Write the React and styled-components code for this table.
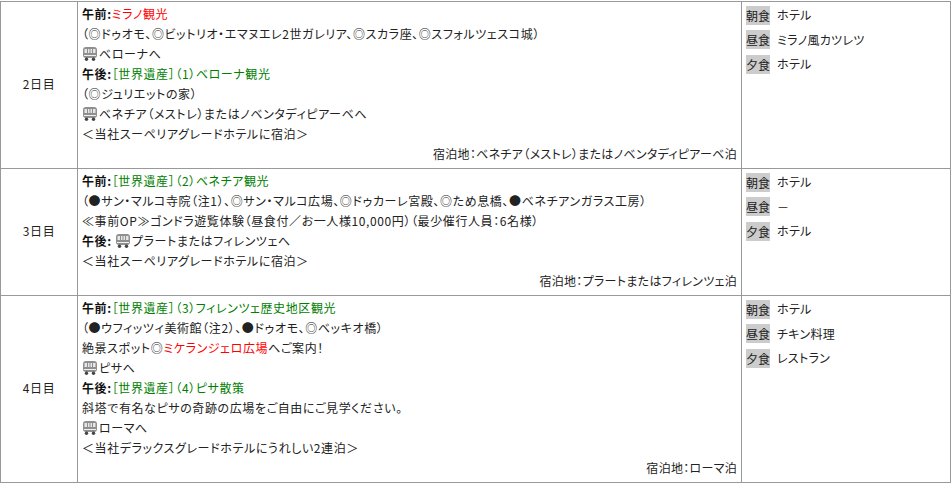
import React from "react"
import styled, { createGlobalStyle } from "styled-components"

const GlobalStyle = createGlobalStyle`
  body {
    margin: 0;
    background: #fff;
    font-family: "Noto Sans CJK JP", "Noto Sans", sans-serif;
    font-size: 12px;
    color: #222;
  }
`

const Page = styled.div`
  padding-top: 1px;
`

const Table = styled.table`
  width: 950px;
  border-collapse: collapse;
  table-layout: fixed;
  font-feature-settings: "palt";
  letter-spacing: 0.6px;
`

const Cell = styled.td`
  border: 1px solid #999;
  padding: 2px 4px 4px;
  line-height: 20px;
  vertical-align: top;
`

const DayCell = styled(Cell)`
  text-align: center;
  vertical-align: middle;
`

const Line = styled.div`
  white-space: nowrap;
`

const Stay = styled.div`
  text-align: right;
  letter-spacing: 0.3px;
`

const Label = styled.b`
  font-weight: bold;
  color: #111;
`

const Red = styled.span`
  color: #ff0000;
`

const Green = styled.span`
  color: #008000;
`

const MealRow = styled.div`
  display: flex;
  align-items: center;
  gap: 7px;
  height: 20px;
  margin: 1px 0 4.5px;
  letter-spacing: 0.3px;
`

const MealTag = styled.span`
  background: #cccccc;
  line-height: 19px;
  letter-spacing: 0;
`

const Icon = styled.svg`
  vertical-align: -3px;
  margin-right: 1px;
`

const Bus = () => (
  <Icon width="16" height="16" viewBox="0 0 16 16">
    <rect x="1" y="1" width="14" height="11" rx="3" fill="#8f8f8f" />
    <rect x="2.5" y="3" width="11" height="4" fill="#e6e6e6" />
    <rect x="5" y="3" width="1" height="4" fill="#8f8f8f" />
    <rect x="7.5" y="3" width="1" height="4" fill="#8f8f8f" />
    <rect x="10" y="3" width="1" height="4" fill="#8f8f8f" />
    <rect x="2" y="9" width="12" height="1" fill="#f0f0f0" />
    <circle cx="4.5" cy="13.3" r="1.7" fill="#444" />
    <circle cx="11.5" cy="13.3" r="1.7" fill="#444" />
  </Icon>
)

const Meals = ({ items }) => (
  <Cell>
    {items.map(([tag, text]) => (
      <MealRow key={tag}>
        <MealTag>{tag}</MealTag>
        <span>{text}</span>
      </MealRow>
    ))}
  </Cell>
)

export default function App() {
  return (
    <Page>
      <GlobalStyle />
      <Table>
        <colgroup>
          <col style={{ width: 77 }} />
          <col style={{ width: 664 }} />
          <col style={{ width: 209 }} />
        </colgroup>
        <tbody>
          <tr>
            <DayCell>2日目</DayCell>
            <Cell>
              <Line><Label>午前:</Label><Red>ミラノ観光</Red></Line>
              <Line>（◎ドゥオモ、◎ビットリオ・エマヌエレ2世ガレリア、◎スカラ座、◎スフォルツェスコ城）</Line>
              <Line><Bus />ベローナへ</Line>
              <Line><Label>午後:</Label><Green>［世界遺産］（1）ベローナ観光</Green></Line>
              <Line>（◎ジュリエットの家）</Line>
              <Line><Bus />ベネチア（メストレ）またはノベンタディピアーベへ</Line>
              <Line>＜当社スーペリアグレードホテルに宿泊＞</Line>
              <Stay>宿泊地：ベネチア（メストレ）またはノベンタディピアーベ泊</Stay>
            </Cell>
            <Meals items={[["朝食", "ホテル"], ["昼食", "ミラノ風カツレツ"], ["夕食", "ホテル"]]} />
          </tr>
          <tr>
            <DayCell>3日目</DayCell>
            <Cell>
              <Line><Label>午前:</Label><Green>［世界遺産］（2）ベネチア観光</Green></Line>
              <Line>（●サン・マルコ寺院（注1）、◎サン・マルコ広場、◎ドゥカーレ宮殿、◎ため息橋、●ベネチアンガラス工房）</Line>
              <Line>≪事前OP≫ゴンドラ遊覧体験（昼食付／お一人様10,000円）（最少催行人員：6名様）</Line>
              <Line><Label>午後:</Label> <Bus />プラートまたはフィレンツェへ</Line>
              <Line>＜当社スーペリアグレードホテルに宿泊＞</Line>
              <Stay>宿泊地：プラートまたはフィレンツェ泊</Stay>
            </Cell>
            <Meals items={[["朝食", "ホテル"], ["昼食", "－"], ["夕食", "ホテル"]]} />
          </tr>
          <tr>
            <DayCell>4日目</DayCell>
            <Cell>
              <Line><Label>午前:</Label><Green>［世界遺産］（3）フィレンツェ歴史地区観光</Green></Line>
              <Line>（●ウフィッツィ美術館（注2）、●ドゥオモ、◎ベッキオ橋）</Line>
              <Line>絶景スポット◎<Red>ミケランジェロ広場</Red>へご案内！</Line>
              <Line><Bus />ピサへ</Line>
              <Line><Label>午後:</Label><Green>［世界遺産］（4）ピサ散策</Green></Line>
              <Line>斜塔で有名なピサの奇跡の広場をご自由にご見学ください。</Line>
              <Line><Bus />ローマへ</Line>
              <Line>＜当社デラックスグレードホテルにうれしい2連泊＞</Line>
              <Stay>宿泊地：ローマ泊</Stay>
            </Cell>
            <Meals items={[["朝食", "ホテル"], ["昼食", "チキン料理"], ["夕食", "レストラン"]]} />
          </tr>
        </tbody>
      </Table>
    </Page>
  )
}
